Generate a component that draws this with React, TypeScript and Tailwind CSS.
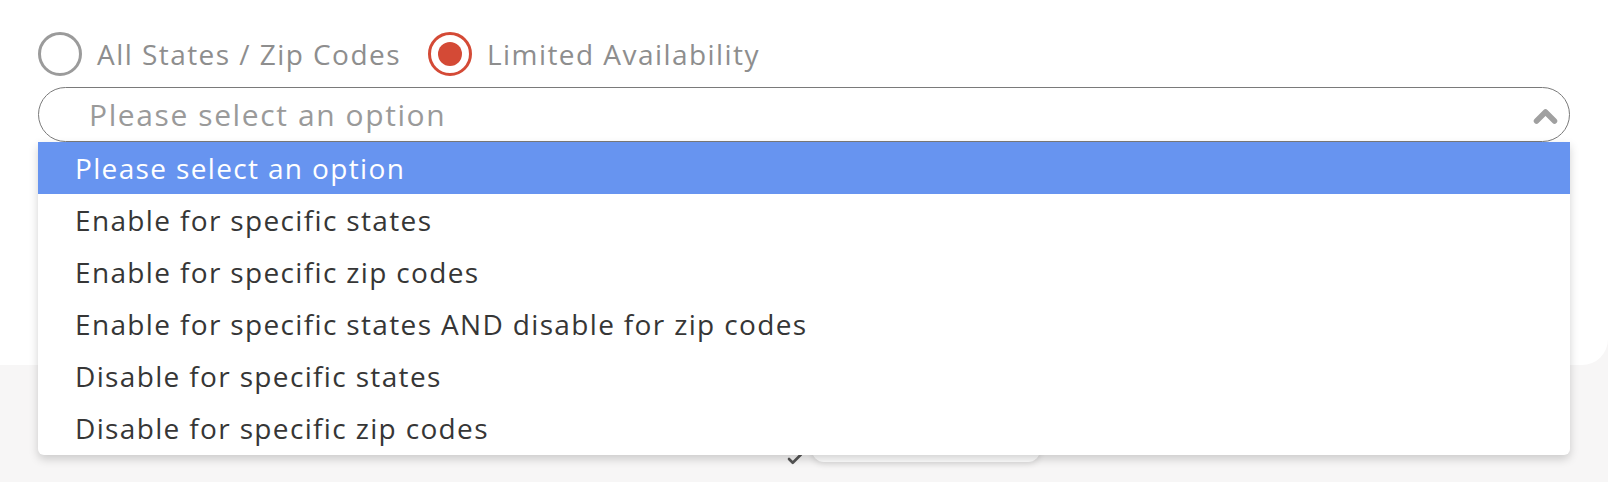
import { Check } from "lucide-react";

const options = [
  "Please select an option",
  "Enable for specific states",
  "Enable for specific zip codes",
  "Enable for specific states AND disable for zip codes",
  "Disable for specific states",
  "Disable for specific zip codes",
];

function Radio({ checked, label }: { checked?: boolean; label: string }) {
  return (
    <label className="flex items-center gap-[15px]">
      <span
        className={
          checked
            ? "flex h-[44px] w-[44px] items-center justify-center rounded-full border-[3px] border-[#d44a36]"
            : "flex h-[44px] w-[44px] items-center justify-center rounded-full border-[3px] border-[#9b9b9b]"
        }
      >
        {checked && <span className="h-[24px] w-[24px] rounded-full bg-[#d44a36]" />}
      </span>
      <span className="text-[28px] tracking-[1.45px] text-[#8e8e8e]">{label}</span>
    </label>
  );
}

export default function App() {
  return (
    <div className="min-h-[482px] bg-[#f7f6f6] font-['Open_Sans',sans-serif]">
      {/* CARD */}
      <div className="h-[365px] rounded-br-[26px] bg-white pl-[38px] pr-[38px] pt-[32px]">
        {/* RADIOS */}
        <div className="flex items-center gap-[27px]">
          <Radio label="All States / Zip Codes" />
          <Radio checked label="Limited Availability" />
        </div>

        {/* SELECT */}
        <div className="relative mt-[11px]">
          <div className="flex h-[55px] items-center justify-between rounded-full border border-[#7a7a7a] pl-[50px] pr-[10px]">
            <span className="text-[30px] tracking-[1.6px] text-[#9a9a9a]">Please select an option</span>
            <svg width="27" height="19" viewBox="0 0 27 19" className="mt-[1px]">
              <polyline
                points="4.5,15 13.5,6 22.5,15"
                fill="none"
                stroke="#a0a0a0"
                strokeWidth="5.5"
                strokeLinecap="round"
                strokeLinejoin="round"
              />
            </svg>
          </div>

          {/* MENU */}
          <ul className="absolute left-0 right-0 top-[55px] z-10 overflow-hidden rounded-b-[6px] bg-white pb-[1px] shadow-[0_4px_10px_rgba(0,0,0,0.18)]">
            {options.map((o, i) => (
              <li
                key={o}
                className={
                  i === 0
                    ? "flex h-[52px] items-center bg-[#6794f0] pl-[37px] text-[28px] tracking-[1.35px] text-white"
                    : "flex h-[52px] items-center pl-[37px] text-[28px] tracking-[1.35px] text-[#363636]"
                }
              >
                {o}
              </li>
            ))}
          </ul>
        </div>
      </div>

      {/* CONTENT BEHIND THE MENU */}
      <div className="flex items-end gap-[8px] pl-[786px] pt-[57px]">
        <Check size={18} strokeWidth={3.5} className="-mb-[6px] text-[#555555]" />
        <div className="h-[40px] w-[228px] rounded-xl bg-white shadow-[0_2px_6px_rgba(0,0,0,0.12)]" />
      </div>
    </div>
  );
}
